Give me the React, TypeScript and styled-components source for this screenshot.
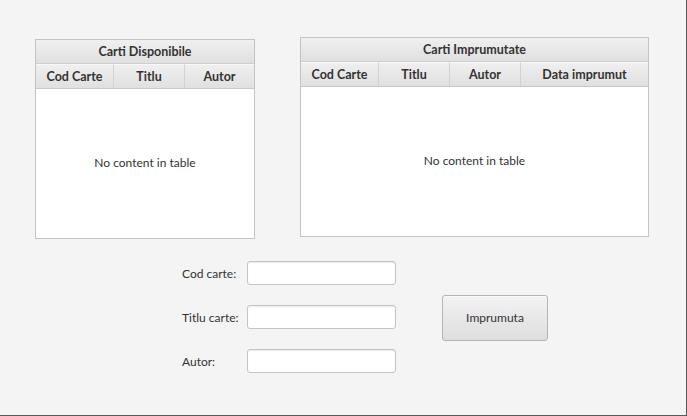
import React from 'react';
import styled, { createGlobalStyle } from 'styled-components';

const GlobalStyle = createGlobalStyle`
  html, body {
    margin: 0;
    padding: 0;
    background: #f4f4f4;
  }
  * {
    box-sizing: border-box;
  }
`;

type Column = { title: string; width: number };

const availableColumns: Column[] = [
  { title: 'Cod Carte', width: 78 },
  { title: 'Titlu', width: 71 },
  { title: 'Autor', width: 69 },
];

const borrowedColumns: Column[] = [
  { title: 'Cod Carte', width: 78 },
  { title: 'Titlu', width: 71 },
  { title: 'Autor', width: 71 },
  { title: 'Data imprumut', width: 127 },
];

function BookTable({ title, columns, offset }: { title: string; columns: Column[]; offset: number }) {
  const total = columns.reduce((s, c) => s + c.width, 0) + 2;
  return (
    <Table $offset={offset} style={{ width: total }}>
      <TitleRow>{title}</TitleRow>
      <HeaderRow>
        {columns.map(c => (
          <HeaderCell key={c.title} style={{ width: c.width }}>
            {c.title}
          </HeaderCell>
        ))}
      </HeaderRow>
      <Placeholder>No content in table</Placeholder>
    </Table>
  );
}

export default function App() {
  return (
    <>
      <GlobalStyle />
      <Window>
        <Tables>
          <BookTable title="Carti Disponibile" columns={availableColumns} offset={2} />
          <BookTable title="Carti Imprumutate" columns={borrowedColumns} offset={0} />
        </Tables>
        <Form>
          <Label>Cod carte:</Label>
          <Input />
          <Label>Titlu carte:</Label>
          <Input />
          <Label>Autor:</Label>
          <Input />
          <Button type="button">Imprumuta</Button>
        </Form>
      </Window>
    </>
  );
}

const Window = styled.div`
  width: 687px;
  height: 416px;
  padding: 37px 0 0 35px;
  background: #f4f4f4;
  border-right: 1px solid #5a5a5a;
  border-bottom: 1px solid #5a5a5a;
  font-family: 'Lato', 'Open Sans', sans-serif;
  font-size: 12px;
  color: #333;
`;

const Tables = styled.div`
  display: flex;
  align-items: flex-start;
  gap: 45px;
`;

const Table = styled.div<{ $offset: number }>`
  margin-top: ${p => p.$offset}px;
  height: 200px;
  display: flex;
  flex-direction: column;
  background: #fff;
  border: 1px solid #c3c3c3;
`;

const TitleRow = styled.div`
  height: 24px;
  display: flex;
  align-items: center;
  justify-content: center;
  font-size: 12.5px;
  font-weight: bold;
  background: linear-gradient(to bottom, #f0f0f0, #e0e0e0);
  border-bottom: 1px solid #cfcfcf;
`;

const HeaderRow = styled.div`
  height: 25px;
  display: flex;
  background: linear-gradient(to bottom, #f0f0f0, #e0e0e0);
  border-bottom: 1px solid #c8c8c8;
`;

const HeaderCell = styled.div`
  display: flex;
  align-items: center;
  justify-content: center;
  font-size: 12.5px;
  font-weight: bold;
  border-right: 1px solid #d2d2d2;
  border-top: 1px solid #f8f8f8;

  &:last-child {
    border-right: none;
    flex: 1;
  }
`;

const Placeholder = styled.div`
  flex: 1;
  display: flex;
  align-items: center;
  justify-content: center;
  padding-bottom: 2px;
`;

const Form = styled.div`
  margin: 22px 0 0 147px;
  display: grid;
  grid-template-columns: 65px 149px auto;
  grid-template-rows: 24px 24px 24px;
  row-gap: 20px;
  align-items: center;
`;

const Label = styled.div`
  grid-column: 1;
`;

const Input = styled.input`
  grid-column: 2;
  height: 24px;
  width: 149px;
  border: 1px solid #c4c4c4;
  border-radius: 3px;
  background: #fff;
  box-shadow: inset 0 1px 1px #ececec;
  outline: none;
`;

const Button = styled.button`
  grid-column: 3;
  grid-row: 1 / span 3;
  align-self: center;
  margin: 1px 0 0 46px;
  width: 106px;
  height: 46px;
  border: 1px solid #b4b4b4;
  border-radius: 3px;
  background: linear-gradient(to bottom, #f2f2f2, #dedede);
  box-shadow: inset 0 1px 0 #fafafa;
  font-family: 'Lato', 'Open Sans', sans-serif;
  font-size: 12px;
  color: #333;
`;
